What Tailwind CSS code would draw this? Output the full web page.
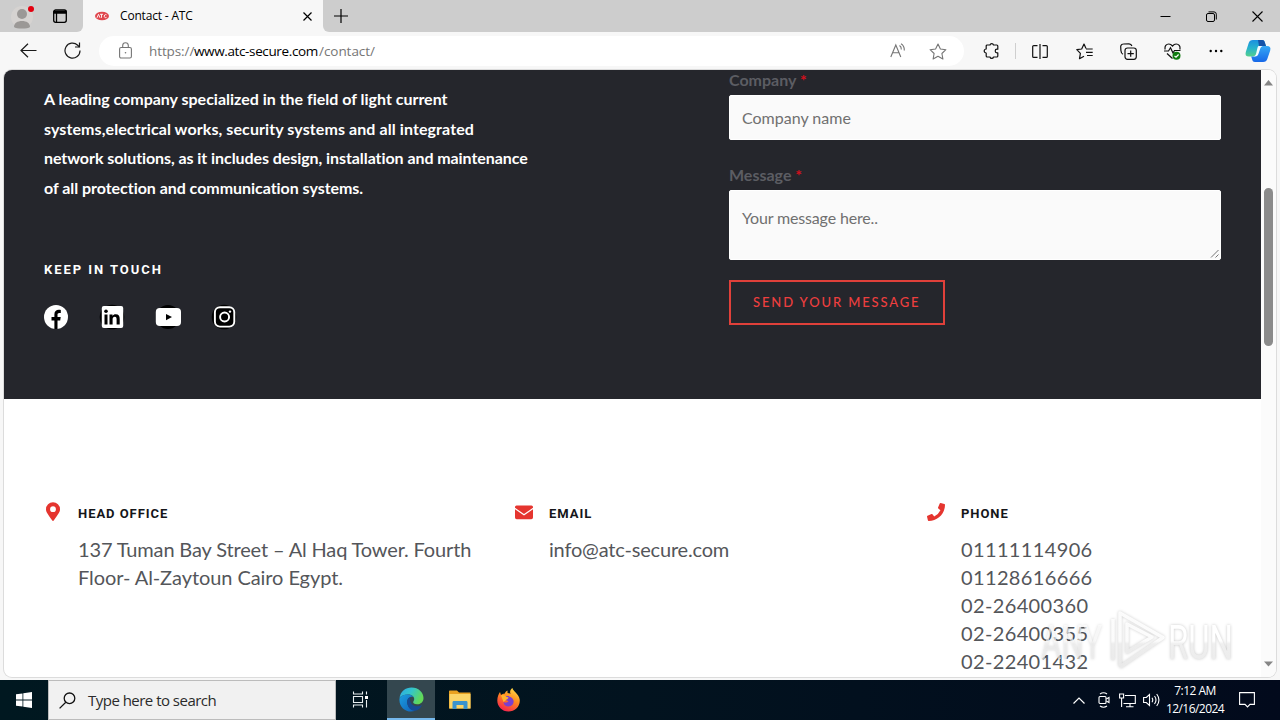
<!DOCTYPE html>
<html lang="en">
<head>
<meta charset="utf-8">
<title>Contact - ATC</title>
<script src="https://cdn.jsdelivr.net/npm/@tailwindcss/browser@4"></script>
</head>
<body class="w-[1280px] h-[720px] overflow-hidden flex flex-col bg-[#f7f7f7] font-['Open_Sans','Noto_Sans',sans-serif] text-black">

<!-- Tab strip -->
<header class="h-8 shrink-0 flex bg-[#f7f7f7]">
  <div class="w-[83px] shrink-0 flex items-center bg-[#cdcdcd] rounded-br-md pl-[11px]">
    <svg class="w-[24px] h-[28px] mt-[-1px]" viewBox="0 0 24 28"><circle cx="11" cy="15" r="11" fill="#d6d3d1"/><circle cx="11" cy="12" r="5" fill="#9b9896"/><path d="M3 25c0-4 3.500-6 8-6s8 2 8 6c-2 2-14 2-16 0z" fill="#9b9896"/><circle cx="20" cy="7" r="3" fill="#e3000f"/></svg>
    <svg class="w-[16px] h-[16px] ml-[17px]" viewBox="0 0 16 16" fill="none" stroke="#000" stroke-width="1.300"><rect x="1.700" y="2" width="12.600" height="12.300" rx="2"/><path d="M2 3.500h12v1.500H2z" fill="#000"/><path d="M4.500 5v9"/></svg>
  </div>
  <div class="w-[240px] shrink-0 flex items-center pl-[12px] bg-[#f7f7f7]">
    <svg class="w-[14px] h-[10px]" viewBox="0 0 14 10"><ellipse cx="7" cy="5" rx="7" ry="4.300" fill="#e0474e"/><path d="M2 6.800l1.500-3.500L5 6.800M5 3.300h3M6.500 3.300v3.500M11.500 3.800c-3-1.300-3 4 0 2.600" stroke="#fff" stroke-width=".9" fill="none"/></svg>
    <span class="ml-[11px] w-[181px] text-[12px] tracking-[-0.18px] leading-4 whitespace-nowrap">Contact - ATC</span>
    <svg class="w-[9px] h-[9px] mt-px ml-[2px]" viewBox="0 0 9 9" stroke="#000" stroke-width="1.200"><path d="M.5.5l8 8M8.500.5l-8 8"/></svg>
  </div>
  <div class="grow flex items-center bg-[#cdcdcd] rounded-bl-md pl-[11px]">
    <svg class="w-[14px] h-[14px]" viewBox="0 0 14 14" stroke="#000" stroke-width="1.200"><path d="M7 0v14M0 7h14"/></svg>
    <div class="ml-auto flex items-center pr-[17px]">
      <svg class="w-[11px] h-[11px] mr-[35px]" viewBox="0 0 11 11" stroke="#000"><path d="M.5 5.500h10"/></svg>
      <svg class="w-[11px] h-[11px] mr-[35px]" viewBox="0 0 11 11" stroke="#000" fill="none"><rect x=".5" y="2.500" width="8" height="8" rx="1.500"/><path d="M2.500.9h5.500a2.300 2.300 0 0 1 2.300 2.300v5.300"/></svg>
      <svg class="w-[11px] h-[11px]" viewBox="0 0 11 11" stroke="#000" stroke-width="1.100"><path d="M.5.500l10 10M10.500.500l-10 10"/></svg>
    </div>
  </div>
</header>

<!-- Toolbar -->
<nav class="h-[38px] shrink-0 flex items-center">
  <svg class="w-[17px] h-[15px] ml-[20px] mt-[-1px]" viewBox="0 0 17 15" fill="none" stroke="#1a1a1a" stroke-width="1.200"><path d="M16.500 7.500H1M8 .7L1 7.500l7 6.800"/></svg>
  <svg class="w-[17px] h-[17px] ml-[27px] mt-[-1px]" viewBox="0 0 17 17" fill="none" stroke="#1a1a1a" stroke-width="1.200"><path d="M16 8.500A7.500 7.500 0 1 1 13.700 3.200L15.500 5"/><path d="M15.500.5V5H11"/></svg>
  <div class="ml-[18px] w-[865px] h-[30px] rounded-full bg-white flex items-center pl-[20px] pr-[17px]">
    <svg class="w-[13px] h-[17px] mt-[-1px]" viewBox="0 0 13 17" fill="none" stroke="#757575" stroke-width="1.100"><rect x=".6" y="5.500" width="11.800" height="10.500" rx="1.500"/><path d="M3.700 5.500V3.500a2.800 2.800 0 0 1 5.600 0v2"/><circle cx="6.500" cy="10.800" r=".8" fill="#757575" stroke="none"/></svg>
    <div class="ml-[17px] text-[13.500px] leading-[18px] whitespace-nowrap text-[#767676] flex"><span class="w-[45px] tracking-[-0.1px]">https://</span><span class="w-[125px] text-black tracking-[-0.37px]">www.atc-secure.com</span><span class="tracking-[-0.05px]">/contact/</span></div>
    <svg class="w-[16px] h-[16px] ml-auto mr-[23px]" viewBox="0 0 16 16" fill="none" stroke="#757575" stroke-width="1.100"><path d="M.8 14L5.800 2l5 12M2.600 9.800h6.400M9.500 2.500q2 1.200 1.800 4M11 .8q3.500 2 3.300 6.700"/></svg>
    <svg class="w-[18px] h-[17px]" viewBox="0 0 18 17" fill="none" stroke="#757575" stroke-width="1.100" stroke-linejoin="round"><path d="M9 1l2.400 5 5.500.7-4 3.800 1 5.500L9 13.300 4.100 16l1-5.500-4-3.800 5.500-.7z"/></svg>
  </div>
  <svg class="w-[16px] h-[16px] ml-[19px]" viewBox="0 0 16 16" fill="none" stroke="#111" stroke-width="1.200" stroke-linejoin="round"><path d="M4.200 2H7a1.800 1.800 0 0 1 3.500 0h3.300a1 1 0 0 1 1 1v3.200H14a1.800 1.800 0 0 0 0 3.600h.8V13a1 1 0 0 1-1 1h-3.300a1.800 1.800 0 0 1-3.500 0H4.200a1 1 0 0 1-1-1V10a2 2 0 0 1 0-4V3a1 1 0 0 1 1-1z"/></svg>
  <div class="w-px h-[16px] bg-[#cfcfcf] ml-[16px]"></div>
  <svg class="w-[16px] h-[15px] ml-[16px]" viewBox="0 0 16 15" fill="none" stroke="#111" stroke-width="1.200"><path d="M8 0v15M5.500 1.600H1.700a1 1 0 0 0-1 1v9.800a1 1 0 0 0 1 1h3.800M10.500 1.600h3.800a1 1 0 0 1 1 1v9.800a1 1 0 0 1-1 1h-3.800"/></svg>
  <svg class="w-[17px] h-[17px] ml-[28px]" viewBox="0 0 17 17" fill="none" stroke="#111" stroke-width="1.200" stroke-linejoin="round"><path d="M10 5.500L8 1 5.700 6 .8 6.700l3.600 3.700-.9 5.300L8 13.200M10 6h6.700M10 9.300h6.700M11 12.500h5.700"/></svg>
  <svg class="w-[17px] h-[17px] ml-[27px]" viewBox="0 0 17 17" fill="none" stroke="#111" stroke-width="1.200"><rect x="5" y="5" width="11.300" height="11.300" rx="2.500"/><path d="M10.700 7.500v6.300M7.500 10.700h6.300M3 11.200C1.500 10.500 1 9 .9 7.500L.7 3.700A2.600 2.600 0 0 1 3.300 1L9 .8c1.500 0 2.500.8 2.900 2.200"/></svg>
  <svg class="w-[18px] h-[17px] ml-[27px]" viewBox="0 0 18 17" fill="none" stroke="#111" stroke-width="1.200"><path d="M1.200 6.500C.3 3 2.500 1 4.800 1 6.500 1 7.500 1.800 8.500 3c1-1.200 2-2 3.700-2 2.300 0 4.500 2 3.600 5.500M0 8h4.500l2-3.200L9 10l1.500-2.500h6M3 10.500l5.500 5"/><circle cx="12.500" cy="12.800" r="4" fill="#107c10" stroke="none"/><path d="M10.500 13l1.500 1.200 2.600-2.700" stroke="#fff"/></svg>
  <svg class="w-[14px] h-[4px] ml-[27px]" viewBox="0 0 14 4"><circle cx="1.700" cy="2" r="1.200"/><circle cx="7" cy="2" r="1.200"/><circle cx="12.300" cy="2" r="1.200"/></svg>
  <svg class="w-[26px] h-[24px] ml-[22px]" viewBox="0 0 26 24">
    <defs>
      <linearGradient id="cpA" x1="0" y1="0" x2="0" y2="1"><stop offset="0" stop-color="#1b8fe0"/><stop offset=".5" stop-color="#27b3cc"/><stop offset="1" stop-color="#55d08c"/></linearGradient>
      <linearGradient id="cpB" x1="0" y1="0" x2="0" y2="1"><stop offset="0" stop-color="#35a8f5"/><stop offset="1" stop-color="#1768e8"/></linearGradient>
    </defs>
    <path d="M8 1h9c2 0 2.500 1.300 3 3l1 3h-4c-2 0-3 1-3.600 3l-1.600 5c-.6 1.700-1.500 2.500-3.500 2.500H4c-3 0-4-1.500-3.200-4.500L3.700 4C4.400 2 5.500 1 8 1z" fill="url(#cpA)"/>
    <path d="M13 1h4c2 0 2.500 1.300 3 3l1 3h-7z" fill="#1552a8"/>
    <path d="M17.500 7H22c3 0 4 1.500 3.200 4.500l-2.900 8.500c-.7 2-1.800 3-4.300 3h-8c-2 0-2.500-1-3-3l-.8-2.500H8c2 0 3-.8 3.600-2.500L14 9.500C14.500 8 15.500 7 17.500 7z" fill="url(#cpB)"/>
    <path d="M13.500 7h4.300c-1.700.5-2.200 1.500-2.700 3l-1.700 5c-.5 1.600-1.500 2.500-3.200 2.500H7.500c2 0 3-1 3.500-2.500l1.200-5c.4-1.600.6-2.500 1.300-3z" fill="#f3fbff"/>
  </svg>
</nav>

<!-- Page viewport -->
<main class="relative h-[607px] w-[1272px] ml-[4px] shrink-0 flex bg-white rounded-[8px] overflow-hidden ring-1 ring-[#dcdcdc]">
  <div class="w-[1257px] shrink-0 font-['Lato',sans-serif]">
    <section class="h-[329px] bg-[#25262c] flex">
      <div class="w-[725px] pl-[40px] pt-[14px]">
        <p class="text-[16px] leading-[29.600px] font-bold text-white whitespace-nowrap"><span class="tracking-[-0.01px]">A leading company specialized in the field of light current</span><br><span class="tracking-[0.09px]">systems,electrical works, security systems and all integrated</span><br><span class="tracking-[-0.07px]">network solutions, as it includes design, installation and maintenance</span><br><span class="tracking-[-0.04px]">of all protection and communication systems.</span></p>
        <h3 class="mt-[58px] text-[13px] leading-5 font-bold text-white font-['Roboto',sans-serif] tracking-[1.950px]">KEEP IN TOUCH</h3>
        <div class="mt-[24px] flex gap-[30px]">
          <svg class="w-[26px] h-[26px] ml-[-1px]" viewBox="0 0 26 26"><circle cx="13" cy="13" r="12" fill="#fff"/><path d="M11.400 25v-8.500H8.500V13h2.900v-2.700c0-3 1.800-4.600 4.400-4.600 1 0 2 .2 2 .2v3h-1.500c-1.400 0-1.800.8-1.800 1.700V13h3.200l-.5 3.500h-2.700V25z" fill="#000"/></svg>
          <svg class="w-[26px] h-[26px]" viewBox="0 0 26 26"><circle cx="13" cy="13" r="12.300" fill="#000"/><rect x="2.800" y="2" width="21.400" height="22" rx="2" fill="#fff"/><path d="M5.500 10.500h3v10h-3zM10.500 10.500h3v1.400c.6-1 1.700-1.700 3.200-1.700 3 0 4 1.900 4 4.700v5.600h-3.100v-5c0-1.500-.3-2.700-1.800-2.700s-2.200 1-2.200 2.600v5.100h-3.100z" fill="#000"/><circle cx="7" cy="7.300" r="1.800" fill="#000"/></svg>
          <svg class="w-[26px] h-[26px]" viewBox="0 0 26 26"><circle cx="13" cy="13" r="12" fill="#000"/><rect x=".8" y="4" width="25.200" height="18" rx="4" fill="#fff"/><path d="M11 10l6 3.100-6 3.100z" fill="#000"/></svg>
          <svg class="w-[26px] h-[26px]" viewBox="0 0 26 26"><circle cx="13" cy="13" r="12.300" fill="#000"/><g fill="none" stroke="#fff" stroke-width="1.900"><rect x="3.900" y="3.200" width="19.400" height="19.400" rx="5" fill="#000"/><circle cx="13.600" cy="13" r="4.500"/></g><circle cx="19" cy="7.600" r="1.200" fill="#fff"/></svg>
        </div>
      </div>
      <form class="w-[492px]">
        <div class="h-[25px] text-[16px] leading-[20px] font-bold text-[#5c5d63] whitespace-nowrap">Company <span class="text-[#d4101c]">*</span></div>
        <div class="h-[45px] rounded-[2px] bg-[#fafafa] border border-white pl-[12px] flex items-center text-[16px] text-[#707070]">Company name</div>
        <div class="mt-[25px] h-[25px] text-[16px] leading-[20px] font-bold text-[#5c5d63]">Message <span class="text-[#d4101c]">*</span></div>
        <div class="h-[70px] rounded-[2px] bg-[#fafafa] border border-white pl-[12px] pt-[15px] flex justify-between text-[16px] leading-6 text-[#707070] tracking-[-0.16px]">Your message here..<svg class="w-[9px] h-[9px] self-end mb-px mr-px" viewBox="0 0 9 9" stroke="#666" stroke-width=".9"><path d="M1 8.500L8.500 1M5.500 8.500l3-3"/></svg></div>
        <div class="mt-[20px] w-[216px] h-[45px] border-2 border-[#e0403a] flex items-center pl-[22px] text-[13px] text-[#ee3f3f] font-medium tracking-[1.880px] whitespace-nowrap">SEND YOUR MESSAGE</div>
      </form>
    </section>

    <section class="flex pt-[103px] pl-[42px] text-[20px] leading-[28px] text-[#54565a] whitespace-nowrap">
      <div class="w-[469px] flex">
        <svg class="w-[14px] h-[19px] shrink-0" viewBox="0 0 384 512"><path fill="#e5352f" d="M172 502C27 291 0 269 0 192a192 192 0 1 1 384 0c0 77-27 99-172 310a24 24 0 0 1-40 0zM192 272a80 80 0 1 0 0-160 80 80 0 0 0 0 160z"/></svg>
        <div class="ml-[18px]">
          <h4 class="h-[33px] leading-[24px] text-[13px] font-bold text-[#15161a] font-['Roboto',sans-serif] tracking-[0.950px]">HEAD OFFICE</h4>
          <p><span class="tracking-[-0.150px]">137 Tuman Bay Street – Al Haq Tower. Fourth</span><br><span class="tracking-[-0.070px]">Floor- Al-Zaytoun Cairo Egypt.</span></p>
        </div>
      </div>
      <div class="w-[412px] flex">
        <svg class="w-[18px] h-[19px] mt-px shrink-0" viewBox="0 0 18 19" fill="#e5352f"><path d="M1.500 2.500h15A1.500 1.500 0 0 1 18 4v.8L9 11 0 4.800V4a1.500 1.500 0 0 1 1.500-1.500z"/><path d="M0 6.300l9 6.200 9-6.200v8.200a1.700 1.700 0 0 1-1.700 1.700H1.700A1.700 1.700 0 0 1 0 14.500z"/></svg>
        <div class="ml-[16px]">
          <h4 class="h-[33px] leading-[24px] text-[13px] font-bold text-[#15161a] font-['Roboto',sans-serif] tracking-[0.950px]">EMAIL</h4>
          <p class="tracking-[-0.180px]">info@atc-secure.com</p>
        </div>
      </div>
      <div class="flex">
        <svg class="w-[18px] h-[18px] mt-px shrink-0" viewBox="0 0 512 512"><path fill="#e5352f" d="M493 25L389 1a24 24 0 0 0-27 14l-48 112a24 24 0 0 0 7 28l61 50a371 371 0 0 1-177 177l-50-61a24 24 0 0 0-28-7L15 362a24 24 0 0 0-14 27l24 104a24 24 0 0 0 23 19c256 0 464-207 464-464a24 24 0 0 0-19-23z"/></svg>
        <div class="ml-[16px]">
          <h4 class="h-[33px] leading-[24px] text-[13px] font-bold text-[#15161a] font-['Roboto',sans-serif] tracking-[0.950px]">PHONE</h4>
          <p class="tracking-[0.360px]">01111114906<br>01128616666<br>02-26400360<br>02-26400355<br>02-22401432</p>
        </div>
      </div>
    </section>
  </div>

  <!-- Scrollbar -->
  <div class="w-[15px] bg-[#fbfbfb] flex flex-col items-center">
    <svg class="w-[9px] h-[6px] mt-[10px]" viewBox="0 0 9 6"><path d="M0 5.500L4.500 0 9 5.500z" fill="#858585"/></svg>
    <div class="mt-[102px] w-[9px] h-[158px] rounded-full bg-[#8b8b8b]"></div>
    <svg class="w-[9px] h-[6px] mt-auto mb-[10px]" viewBox="0 0 9 6"><path d="M0 .5L4.500 5.500 9 .5z" fill="#858585"/></svg>
  </div>

  <!-- Watermark overlay -->
  <svg class="absolute left-[1026px] top-[532px] w-[220px] h-[75px]" viewBox="0 0 220 75" font-family="Roboto, sans-serif">
    <defs>
      <linearGradient id="wm" gradientUnits="userSpaceOnUse" x1="0" y1="10" x2="0" y2="68"><stop offset="0" stop-color="#fff"/><stop offset=".5" stop-color="#fff"/><stop offset=".55" stop-color="#efefef"/><stop offset="1" stop-color="#ebebeb"/></linearGradient>
    </defs>
    <g style="filter:drop-shadow(0 0 1.500px rgba(0,0,0,.22))">
      <text x="11" y="57" font-size="49" textLength="61" lengthAdjust="spacingAndGlyphs" fill="url(#wm)" opacity=".65">ANY</text>
      <text x="138" y="57" font-size="49" textLength="65" lengthAdjust="spacingAndGlyphs" fill="url(#wm)">RUN</text>
      <path d="M83 58V17M90 64V11l43 24.500-43 29.500M97 22v28l25-15z" fill="none" stroke="url(#wm)" stroke-width="3.500" stroke-linejoin="round" opacity=".9"/>
    </g>
  </svg>
</main>

<!-- Taskbar -->
<footer class="mt-auto h-10 shrink-0 flex items-center bg-linear-to-r from-[#001820] via-[#02131f] to-[#020a1c] text-white">
  <div class="w-[48px] flex justify-center"><svg class="w-[16px] h-[16px]" viewBox="0 0 16 16" fill="#fff"><path d="M0 2.300L6.500 1.400v6.200H0zM7.300 1.300L16 0v7.600H7.300zM0 8.400h6.500v6.200L0 13.700zM7.300 8.400H16V16l-8.700-1.300z"/></svg></div>
  <div class="w-[288px] h-10 bg-[#f1f1f1] border border-[#bcbcbc] flex items-center pl-[10px]">
    <svg class="w-[17px] h-[17px]" viewBox="0 0 17 17" fill="none" stroke="#111" stroke-width="1.300"><circle cx="10.500" cy="6.300" r="5.300"/><path d="M6.800 10.200L.6 16.400"/></svg>
    <span class="ml-[12px] text-[15px] leading-5 text-[#2b2b2b] tracking-[-0.520px] whitespace-nowrap">Type here to search</span>
  </div>
  <div class="w-[51px] flex justify-center"><svg class="w-[17px] h-[17px] ml-[-3px] mt-[-1px]" viewBox="0 0 17 17" fill="none" stroke="#e8eef0" stroke-width="1.100"><path d="M1.500.5v2.500h9V.5M1.500 16.500V14h9v2.500M1.500 5.500h9v6h-9zM14.500.5v3M14.500 9v7.500"/><path d="M13 5h3v3h-3z" fill="#fff" stroke="none"/></svg></div>
  <div class="w-[48px] h-10 bg-[#34474f] border-b-2 border-[#76b9ed] flex items-center justify-center">
    <svg class="w-[25px] h-[25px]" viewBox="0 0 25 25">
      <defs>
        <linearGradient id="edA" x1="0" y1="0" x2="1" y2=".4"><stop offset="0" stop-color="#2da8e4"/><stop offset=".5" stop-color="#33c5cc"/><stop offset="1" stop-color="#62d957"/></linearGradient>
        <linearGradient id="edB" x1="0" y1="0" x2="1" y2="1"><stop offset="0" stop-color="#1b9ee0"/><stop offset="1" stop-color="#1060b8"/></linearGradient>
      </defs>
      <path d="M.5 11C1.500 4.500 6.500.5 12.500.5 19.500.5 24.500 5.500 24.500 11c0 4-3 6.300-6.300 6.300-3 0-4.200-1.300-4-2.300.2-.8 1-1.200 1-3C15.200 9.500 12.500 7.500 9 7.500c-4 0-7 1.500-8.500 3.500z" fill="url(#edA)"/>
      <path d="M.5 11.500C1.500 9 5 7.300 9 7.500c2.500.1 4.500 1 5.500 2.500-4-1-6.500 2-6.300 5.500.3 4.500 3.800 7.500 8.300 8-7 3.500-17-2-16-12z" fill="url(#edB)"/>
      <path d="M8.200 15c0-2.500 1-4.200 3.200-5-.9 2-.5 5 1.300 7 2.500 2.800 7 3 10.300 1-1.500 3.500-4 5.500-7 5.700-5 .2-7.800-4.500-7.800-8.700z" fill="#164a94"/>
    </svg>
  </div>
  <div class="w-[49px] flex justify-center"><svg class="w-[22px] h-[20px]" viewBox="0 0 22 20"><path d="M0 1.500C0 .7.500.5 1 .5h7l2 2h11.500V18.500H0z" fill="#e9a220"/><path d="M.5 4h21v14.500H.5z" fill="#fbd568"/><path d="M3.500 19v-6.500c0-1 .5-1.500 1.500-1.500h12c1 0 1.500.5 1.500 1.500V19h-4v-4h-7v4z" fill="#3a94cf"/></svg></div>
  <div class="w-[49px] flex justify-center"><svg class="w-[23px] h-[24px]" viewBox="0 0 23 24">
    <defs><linearGradient id="ffA" x1=".8" y1="0" x2=".3" y2="1"><stop offset="0" stop-color="#ffe04a"/><stop offset=".45" stop-color="#ff8a1e"/><stop offset="1" stop-color="#f5204f"/></linearGradient></defs>
    <path d="M3 4l1 3c1-1 2-1.300 3.500-1.300C8.500 4 9.500 3 10.500 2.600V5c1 0 2 .3 3 1C12.500 3.500 13.500 1 15.500 0c.2 3 6.500 6 7.200 11.500C23.500 18.500 18 23.500 11.500 23.500S.3 18.500.3 12.500C.3 9 1.500 6 3 4z" fill="url(#ffA)"/>
    <path d="M7.500 9c3-2 8-.5 9 3.500.7 3-1.500 6-5 6-3 0-5-2-5-4.500 2 1.300 4 .5 5-1-1.500 0-3-1-4-4z" fill="#7a3fd0"/>
    <path d="M4 7.500C6 6.500 8.500 7.300 9.500 9l2 .3c-.3 1.700-1.500 2-2.500 2.500-.5 1-1.500 1.700-2.500 2.200z" fill="#ffb52e"/>
  </svg></div>
  <div class="ml-auto flex items-center pr-[25px]">
    <svg class="w-[12px] h-[7px]" viewBox="0 0 12 7" fill="none" stroke="#fff" stroke-width="1.200"><path d="M.5 6.500L6 1l5.500 5.500"/></svg>
    <svg class="w-[12px] h-[16px] ml-[13px]" viewBox="0 0 12 16" fill="none" stroke="#fff" stroke-width="1.100"><rect x="1" y="4.500" width="7" height="7" rx="1"/><path d="M8.300 7l2.700-1.500v5L8.300 9M2 2Q5.500-.5 9 2M2 14q3.500 2.500 7 0"/></svg>
    <svg class="w-[17px] h-[15px] ml-[9px]" viewBox="0 0 17 15" fill="none" stroke="#fff" stroke-width="1.100"><path d="M6 2.500h10.300v8H4.500M.6 1h4v4h-4zM2.600 5v9M11 10.500v3M7 13.700h7.500"/></svg>
    <svg class="w-[17px] h-[14px] ml-[7px]" viewBox="0 0 17 14" fill="none" stroke="#fff" stroke-width="1.100"><path d="M.6 4.500h2.700L6.500 1.500v11l-3.200-3H.6zM9 4.800q1.500 2.200 0 4.400M11.500 3q3 4 0 8M13.700 1q4.500 6 0 12"/></svg>
    <div class="ml-[5px] w-[60px] text-center text-[12px] leading-[18px] whitespace-nowrap tracking-[-0.550px]">7:12 AM<br>12/16/2024</div>
    <svg class="w-[16px] h-[16px] ml-[14px]" viewBox="0 0 16 16" fill="none" stroke="#fff" stroke-width="1.100"><path d="M.6.6h14.800v11.800H11L8.500 15 6 12.400H.6z"/></svg>
  </div>
</footer>
</body>
</html>
